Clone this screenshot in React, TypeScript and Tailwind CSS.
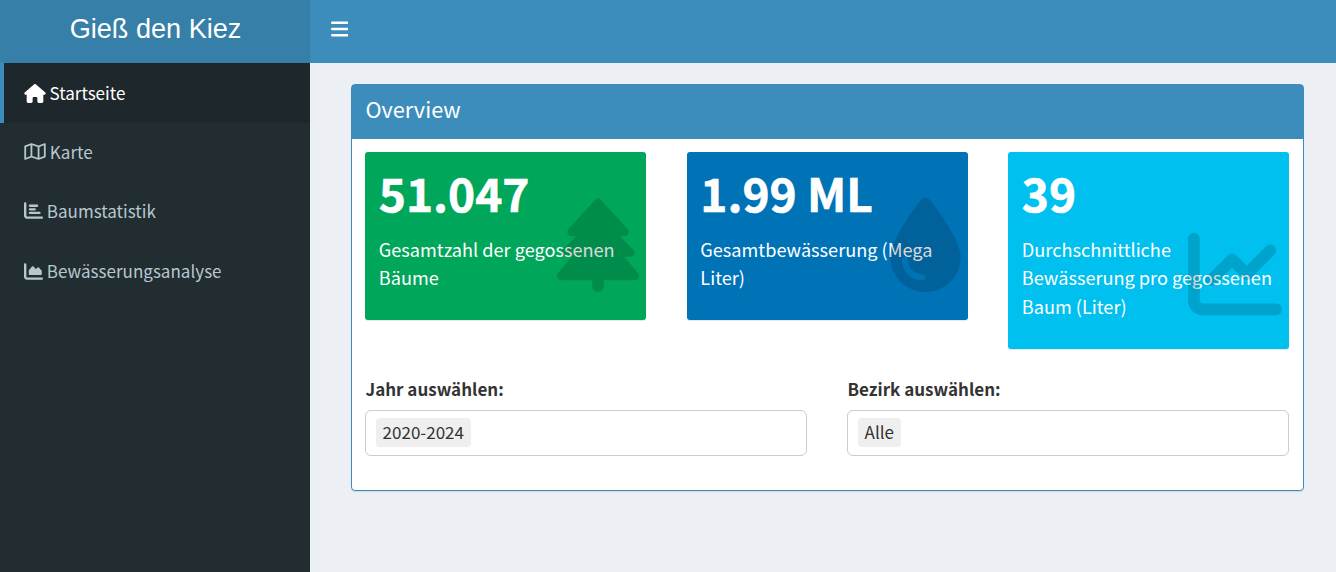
import type { IconType } from 'react-icons';
import { FaBars, FaChartArea, FaChartBar, FaChartLine, FaDroplet, FaHouse, FaRegMap, FaTree } from 'react-icons/fa6';

type NavItem = { label: string; icon: IconType; iconClass: string; active?: boolean };

const navItems: NavItem[] = [
  { label: 'Startseite', icon: FaHouse, iconClass: 'w-[22px]', active: true },
  { label: 'Karte', icon: FaRegMap, iconClass: 'w-[22px]' },
  { label: 'Baumstatistik', icon: FaChartBar, iconClass: 'w-[19px]' },
  { label: 'Bewässerungsanalyse', icon: FaChartArea, iconClass: 'w-[19px]' },
];

type Stat = { value: string; label: string; icon: IconType; bg: string; iconClass: string };

const stats: Stat[] = [
  { value: '51.047', label: 'Gesamtzahl der gegossenen Bäume', icon: FaTree, bg: 'bg-[#00a65a]', iconClass: 'w-[82px]' },
  { value: '1.99 ML', label: 'Gesamtbewässerung (Mega Liter)', icon: FaDroplet, bg: 'bg-[#0073b7]', iconClass: 'w-[71px]' },
  { value: '39', label: 'Durchschnittliche Bewässerung pro gegossenen Baum (Liter)', icon: FaChartLine, bg: 'bg-[#00c0ef]', iconClass: 'w-[94px]' },
];

function NavLink({ label, icon: Icon, iconClass, active }: NavItem) {
  return (
    <a
      className={
        active
          ? 'flex h-[60px] items-center gap-[3.5px] border-l-4 border-[#3c8dbc] bg-[#1e282c] pl-5 text-white'
          : 'flex h-[59px] items-center gap-[3.8px] border-l-4 border-transparent pb-[1.4px] pl-5 text-[#b8c7ce] last:h-[60px] last:pb-0'
      }
    >
      <Icon className={`h-[19px] shrink-0 ${iconClass}`} />
      <span className="text-[17.05px] leading-6">{label}</span>
    </a>
  );
}

function StatBox({ value, label, icon: Icon, bg, iconClass }: Stat) {
  return (
    <div className={`relative w-[281px] rounded-[3px] px-[13.8px] pt-[13px] pb-[28.2px] text-white shadow-[0_1px_1px_rgba(0,0,0,0.1)] ${bg}`}>
      <h3 className="text-[46px] font-bold leading-[54px] [-webkit-text-stroke:0.6px_white]">{value}</h3>
      <p className="mt-[15.8px] -mr-1 mb-[0.2px] text-[18.15px] leading-[28.5px]">{label}</p>
      <Icon className={`absolute right-[7px] bottom-7 h-[94px] text-black/15 ${iconClass}`} />
    </div>
  );
}

function SelectField({ label, value }: { label: string; value: string }) {
  return (
    <div className="w-[442px]">
      <label className="block pl-[0.5px] text-[17px] font-bold leading-[25px] text-[#333]">{label}</label>
      <div className="mt-[9px] flex h-[46px] items-start rounded-[6px] border border-[#ccc] bg-white px-2.5 pt-[7px]">
        <span className="flex h-[29px] items-start rounded-[4px] bg-[#efefef] px-[6.6px] text-[17px] leading-[27px] text-[#333]">{value}</span>
      </div>
    </div>
  );
}

export default function App() {
  return (
    <div className="flex h-[572px] w-[1336px] flex-col overflow-hidden bg-[#ecf0f5] font-['Noto_Sans_CJK_SC',sans-serif]">
      <header className="flex h-[63px] shrink-0 bg-[#3c8dbc] text-white">
        <div className="w-[310px] bg-[#367fa9] pl-px text-center font-['Liberation_Sans',sans-serif] text-[27.1px] leading-[57px]">Gieß den Kiez</div>
        <button className="flex h-[58px] w-[58.5px] items-center justify-center" aria-label="Menu">
          <FaBars className="h-[20px] w-[17.5px]" />
        </button>
      </header>
      <div className="flex flex-1">
        <nav className="w-[310px] shrink-0 bg-[#222d32]">
          {navItems.map((item) => (
            <NavLink key={item.label} {...item} />
          ))}
        </nav>
        <main className="flex-1 pt-[21px] pl-[41px]">
          <section className="h-[407px] w-[953px] rounded-[4px] border border-[#3c8dbc] bg-white shadow-[0_1px_1px_rgba(0,0,0,0.1)]">
            <h2 className="h-[54px] bg-[#3c8dbc] px-[13.5px] text-[21.7px] leading-[48px] text-white">Overview</h2>
            <div className="pt-[13px] pr-3.5 pl-[13px]">
              <div className="flex h-[197px] items-start justify-between">
                {stats.map((stat) => (
                  <StatBox key={stat.value} {...stat} />
                ))}
              </div>
              <div className="mt-[27px] flex justify-between">
                <SelectField label="Jahr auswählen:" value="2020-2024" />
                <SelectField label="Bezirk auswählen:" value="Alle" />
              </div>
            </div>
          </section>
        </main>
      </div>
    </div>
  );
}
